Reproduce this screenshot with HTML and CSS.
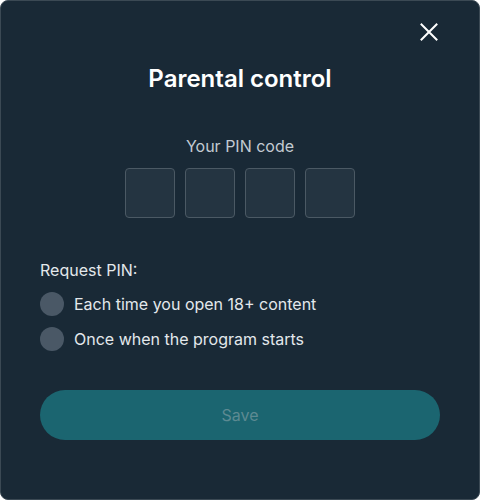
FILE: index.html
```html
<!DOCTYPE html>
<html lang="en">
<head>
<meta charset="utf-8">
<title>Parental control</title>
<link rel="stylesheet" href="styles.css">
</head>
<body>
<div class="dialog">
  <button class="close" aria-label="Close">
    <svg width="18" height="18" viewBox="0 0 18 18"><path d="M1.5 1.5 L16.5 16.5 M16.5 1.5 L1.5 16.5" stroke="#ffffff" stroke-width="2" stroke-linecap="square" fill="none"/></svg>
  </button>
  <h1 class="title">Parental control</h1>
  <div class="pin-label">Your PIN code</div>
  <div class="pin-row">
    <div class="pin-box"></div>
    <div class="pin-box"></div>
    <div class="pin-box"></div>
    <div class="pin-box"></div>
  </div>
  <div class="request">Request PIN:</div>
  <div class="options">
    <label class="option"><span class="radio"></span><span>Each time you open 18+ content</span></label>
    <label class="option"><span class="radio"></span><span>Once when the program starts</span></label>
  </div>
  <button class="save">Save</button>
</div>
</body>
</html>
```
FILE: styles.css
```css
html, body {
  margin: 0;
  padding: 0;
  background: #ffffff;
}
body {
  font-family: Inter, "Noto Sans", sans-serif;
}
.dialog {
  position: relative;
  box-sizing: border-box;
  width: 480px;
  height: 500px;
  background: #192936;
  border: 1px solid #3b4954;
  border-radius: 8px;
  padding: 63px 39px 0;
  display: flex;
  flex-direction: column;
}
.close {
  position: absolute;
  top: 22px;
  right: 41px;
  width: 18px;
  height: 18px;
  padding: 0;
  border: 0;
  background: none;
  display: flex;
}
.title {
  margin: 0;
  font-size: 24px;
  line-height: 30px;
  font-weight: 600;
  color: #ffffff;
  text-align: center;
}
.pin-label {
  margin-top: 42px;
  font-size: 16px;
  line-height: 20px;
  color: #c3cbd2;
  text-align: center;
}
.pin-row {
  margin-top: 12px;
  display: flex;
  justify-content: center;
  gap: 10px;
}
.pin-box {
  box-sizing: border-box;
  width: 50px;
  height: 50px;
  background: #243441;
  border: 1px solid #4b5964;
  border-radius: 4px;
}
.request {
  margin-top: 42px;
  font-size: 16px;
  line-height: 20px;
  color: #e3e8ec;
}
.options {
  margin-top: 12px;
  display: flex;
  flex-direction: column;
  gap: 11px;
}
.option {
  display: flex;
  align-items: center;
  gap: 10px;
  font-size: 16px;
  line-height: 24px;
  color: #e3e8ec;
}
.radio {
  width: 24px;
  height: 24px;
  border-radius: 50%;
  background: #4a5866;
  flex: none;
}
.save {
  margin-top: 39px;
  height: 50px;
  border: 0;
  border-radius: 25px;
  background: #1b6570;
  color: #5d8a92;
  font-family: Inter, "Noto Sans", sans-serif;
  font-size: 16px;
}
```
